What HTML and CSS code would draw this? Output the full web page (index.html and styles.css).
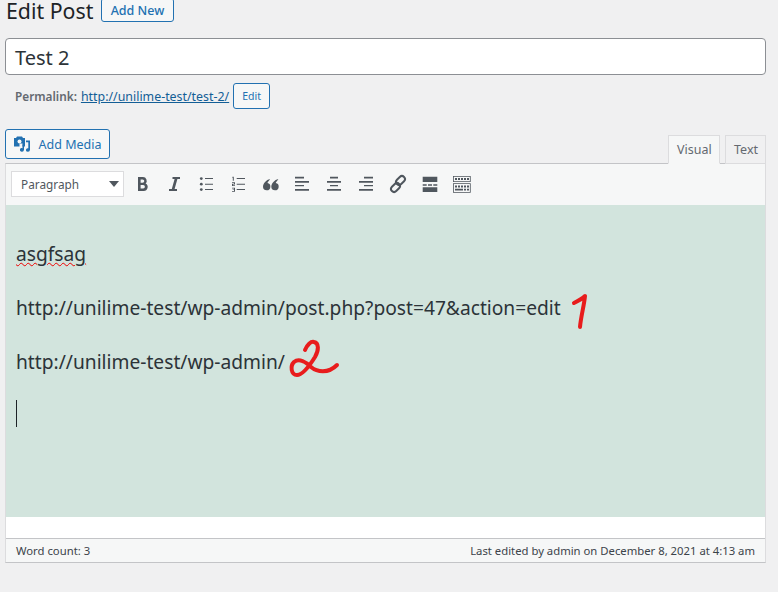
FILE: index.html
```html
<!DOCTYPE html>
<html>
<head>
    <title>Edit Post</title>
    <link rel="stylesheet" href="styles.css">
</head>
<body>
    <div class="heading-row">
        <h1>Edit Post</h1>
        <a class="btn add-new">Add New</a>
    </div>

    <div class="title-box">Test 2</div>

    <div class="permalink">
        <strong>Permalink:</strong>
        <a class="perma-link">http://unilime-test/test-2/</a>
        <a class="btn edit-slug">Edit</a>
    </div>

    <div class="editor-top">
        <a class="btn add-media">
            <svg width="18" height="18" viewBox="0 0 18 18">
                <path fill="#2271b1" d="M0 3h2l1-1.500h5l1 1.500h2v8.500h-2.500v-3h-3v3h-5.500z"/>
                <circle cx="5.500" cy="6.500" r="2" fill="#f6f7f7"/>
                <path fill="#2271b1" d="M12 5.500h4v9.500h-.1a2 1.800 0 1 1-1.600-1.800v-6h-2.300zM8.500 9.500h1.500v5.500h-.1a2 1.800 0 1 1-1.400-1.800z"/>
            </svg>
            Add Media
        </a>
        <div class="tabs">
            <span class="tab active">Visual</span>
            <span class="tab text-tab">Text</span>
        </div>
    </div>

    <div class="editor">
        <div class="toolbar">
            <div class="format-select">Paragraph<span class="arrow"></span></div>
            <div class="tool-icons">
                <svg class="tool" viewBox="0 0 20 20"><path d="M6 3h5a3.800 3.800 0 0 1 2.600 6.500a4 4 0 0 1-2.100 7.500h-5.500zM8.600 5.400v3.400h2a1.700 1.700 0 0 0 0-3.400zM8.600 11v3.600h2.500a1.800 1.800 0 0 0 0-3.600z"/></svg>
                <svg class="tool" viewBox="0 0 20 20"><path d="M8.500 3h7.500v2h-2.600l-2.800 10h2.400v2h-8v-2h2.800l2.800-10h-2.100z"/></svg>
                <svg class="tool" viewBox="0 0 20 20"><path d="M9 4h8v1.100h-8zM9 9.700h8v1.100h-8zM9 15h8v1.100h-8z"/><circle cx="5.300" cy="4.600" r="1.400"/><circle cx="5.300" cy="10.200" r="1.400"/><circle cx="5.300" cy="15.600" r="1.400"/></svg>
                <svg class="tool" viewBox="0 0 20 20"><path d="M8.700 4h8.300v1.100h-8.300zM8.700 9.700h8.300v1.100h-8.300zM8.700 15h8.300v1.100h-8.300zM4.500 2.800h1.300v4h-1v-3h-.6zM4 8.300h3v2.100h-2v.8h2v.8h-3v-2.300h2v-.6h-2zM4 13.700h3v4h-3v-.8h2v-.8h-1.400v-.7h1.400v-.9h-2z"/></svg>
                <svg class="tool" viewBox="0 0 20 20"><path d="M10 5c-.2 1-1.800 2-2.600 4a3.700 3.700 0 1 1-4.400 4c0-4 3.300-7 7-8zM18.300 5c-.2 1-1.800 2-2.600 4a3.700 3.700 0 1 1-4.400 4c0-4 3.300-7 7-8z"/></svg>
                <svg class="tool" viewBox="0 0 20 20"><path d="M3 2.700h9v1.700h-9zM3 7h14v1.700h-14zM3 11h9v1.200h-9zM3 15h14v1.700h-14z"/></svg>
                <svg class="tool" viewBox="0 0 20 20"><path d="M6 2.700h8v1.700h-8zM3 7h14v1.700h-14zM6 11h8v1.200h-8zM3 15h14v1.700h-14z"/></svg>
                <svg class="tool" viewBox="0 0 20 20"><path d="M8 2.700h9v1.700h-9zM3 7h14v1.700h-14zM8 11h9v1.200h-9zM3 15h14v1.700h-14z"/></svg>
                <svg class="tool" viewBox="0 0 20 20"><g fill="none" stroke="#50575e" stroke-width="2"><rect x="9.500" y="1.500" width="6" height="10" rx="3" transform="rotate(45 12.500 6.500)"/><rect x="4.500" y="8.500" width="6" height="10" rx="3" transform="rotate(45 7.500 13.500)"/></g></svg>
                <svg class="tool" viewBox="0 0 20 20"><path d="M2.700 2.700h14.600v5.300h-14.600zM2.700 13.300h14.600v4.700h-14.600zM2.700 10.300h4v1.400h-4zM8 10.300h4v1.400h-4zM13.300 10.300h4v1.400h-4z"/></svg>
                <svg class="tool" viewBox="0 0 20 20"><path d="M1 2h17.700v6h-17.700zM1.800 2.800v4.400h16.100v-4.400zM1 9.300h17.700v9.400h-17.700zM1.800 10.100v7.800h16.100v-7.800zM3 4h2v2h-2zM6 4h2v2h-2zM9 4h2v2h-2zM12 4h2v2h-2zM15 4h2v2h-2zM3 11.500h2v2h-2zM6 11.500h2v2h-2zM9 11.500h2v2h-2zM12 11.500h2v2h-2zM15 11.500h2v2h-2zM3 14.800h8v1.600h-8zM12 14.800h2v1.600h-2zM15 14.800h2v1.600h-2z"/></svg>
            </div>
        </div>

        <div class="content">
            <p><span class="misspelled">asgfsag</span></p>
            <p>http://unilime-test/wp-admin/post.php?post=47&amp;action=edit</p>
            <p>http://unilime-test/wp-admin/</p>
            <p><span class="caret"></span></p>
            <svg class="scribble" width="778" height="592" viewBox="0 0 778 592">
                <path d="M574 303C578 301 582 299 585 296C584 306 581 316 580 327"/>
                <path d="M305 350C307 345 311 341 314 342C319 343 319 350 315 357C310 365 303 375 297 375C291 375 290 366 294 362C299 358 306 362 311 367C317 372 328 374 337 365"/>
            </svg>
        </div>
        <div class="content-foot"></div>

        <div class="status-bar">
            <span>Word count: 3</span>
            <span>Last edited by admin on December 8, 2021 at 4:13 am</span>
        </div>
    </div>
</body>
</html>
```

FILE: styles.css
```css
html, body {
    height: 100%;
    overflow: hidden;
}

body {
    margin: 0;
    padding: 0 12px 0 5px;
    background: #f0f0f1;
    font-family: "Noto Sans", sans-serif;
    font-size: 13px;
    color: #3c434a;
}

.heading-row {
    display: flex;
    align-items: flex-end;
    height: 22px;
}

h1 {
    width: 87px;
    margin: 0 8px 0 1px;
    font-size: 21.300px;
    font-weight: 400;
    line-height: 22px;
    color: #1d2327;
    white-space: nowrap;
}

.btn {
    display: inline-flex;
    align-items: center;
    justify-content: center;
    box-sizing: border-box;
    border: 1px solid #2271b1;
    border-radius: 3px;
    background: #f6f7f7;
    color: #2271b1;
}

.add-new {
    width: 73px;
    height: 24px;
    font-size: 12.500px;
    font-weight: 500;
}

.title-box {
    box-sizing: border-box;
    height: 37px;
    margin-top: 16px;
    padding-left: 9px;
    border: 1px solid #8c8f94;
    border-radius: 4px;
    background: #fff;
    color: #2c3338;
    font-size: 20px;
    line-height: 37px;
}

.permalink {
    display: flex;
    align-items: center;
    height: 26px;
    margin-top: 8px;
    padding-left: 10px;
    font-size: 12.400px;
    color: #646970;
    white-space: nowrap;
}

.permalink strong {
    font-size: 11.800px;
    font-weight: 600;
    margin-right: 4px;
}

.perma-link {
    color: #135e96;
    text-decoration: underline;
    margin-right: 4px;
}

.edit-slug {
    width: 37px;
    height: 26px;
    font-size: 10.500px;
}

.editor-top {
    display: flex;
    justify-content: space-between;
    align-items: flex-end;
    height: 34px;
    margin-top: 20px;
}

.add-media {
    gap: 7px;
    width: 105px;
    height: 30px;
    margin-bottom: 4px;
    font-size: 12.500px;
}

.tabs {
    display: flex;
    gap: 5px;
    margin-bottom: -1px;
    position: relative;
}

.tab {
    box-sizing: border-box;
    height: 29px;
    padding: 0 8px;
    border: 1px solid #dcdcde;
    background: #f0f0f1;
    color: #646970;
    font-size: 12.500px;
    line-height: 28px;
}

.tab.active {
    width: 52px;
    border-bottom-color: #f6f7f7;
    background: #f6f7f7;
}

.tab.text-tab {
    width: 41px;
}

.editor {
    border: 1px solid #c3c4c7;
    border-left-color: #dcdcde;
    border-right-color: #dcdcde;
    background: #fff;
}

.toolbar {
    display: flex;
    align-items: center;
    box-sizing: border-box;
    height: 41px;
    padding: 0 0 2px 5px;
    background: #f6f7f7;
}

.format-select {
    display: flex;
    align-items: center;
    justify-content: space-between;
    box-sizing: border-box;
    width: 113px;
    height: 26px;
    padding: 0 3px 0 9px;
    border: 1px solid #dcdcde;
    background: #fff;
    font-size: 11.800px;
    color: #50575e;
}

.arrow {
    width: 0;
    height: 0;
    margin-right: 1px;
    border: 5px solid transparent;
    border-top: 6px solid #50575e;
    border-bottom: 0;
}

.tool-icons {
    display: flex;
    gap: 12px;
    margin-left: 8px;
}

.tool {
    width: 20px;
    height: 20px;
    fill: #50575e;
}

.content {
    height: 312px;
    padding: 0 10px;
    background: #d2e4dd;
    color: #2c3338;
    font-size: 19.200px;
    line-height: 27px;
    overflow: hidden;
}

.content p {
    margin: 0;
    height: 27px;
    padding-top: 27px;
    white-space: nowrap;
}

.content p:first-child {
    padding-top: 35px;
}

.misspelled {
    text-decoration: underline wavy #e00;
    text-decoration-thickness: 1px;
}

.caret {
    display: inline-block;
    width: 1px;
    height: 27px;
    background: #1d2327;
    vertical-align: top;
    transform: translateY(-2px);
}

.scribble {
    position: absolute;
    left: 0;
    top: 0;
    fill: none;
    stroke: #e81c1c;
    stroke-width: 4;
    stroke-linecap: round;
    stroke-linejoin: round;
    pointer-events: none;
}

.content-foot {
    height: 21px;
    background: #fff;
}

.status-bar {
    display: flex;
    justify-content: space-between;
    align-items: center;
    height: 23px;
    padding: 0 10px;
    border-top: 1px solid #c3c4c7;
    background: #f6f7f7;
    font-size: 11.300px;
    color: #3c434a;
}
```
